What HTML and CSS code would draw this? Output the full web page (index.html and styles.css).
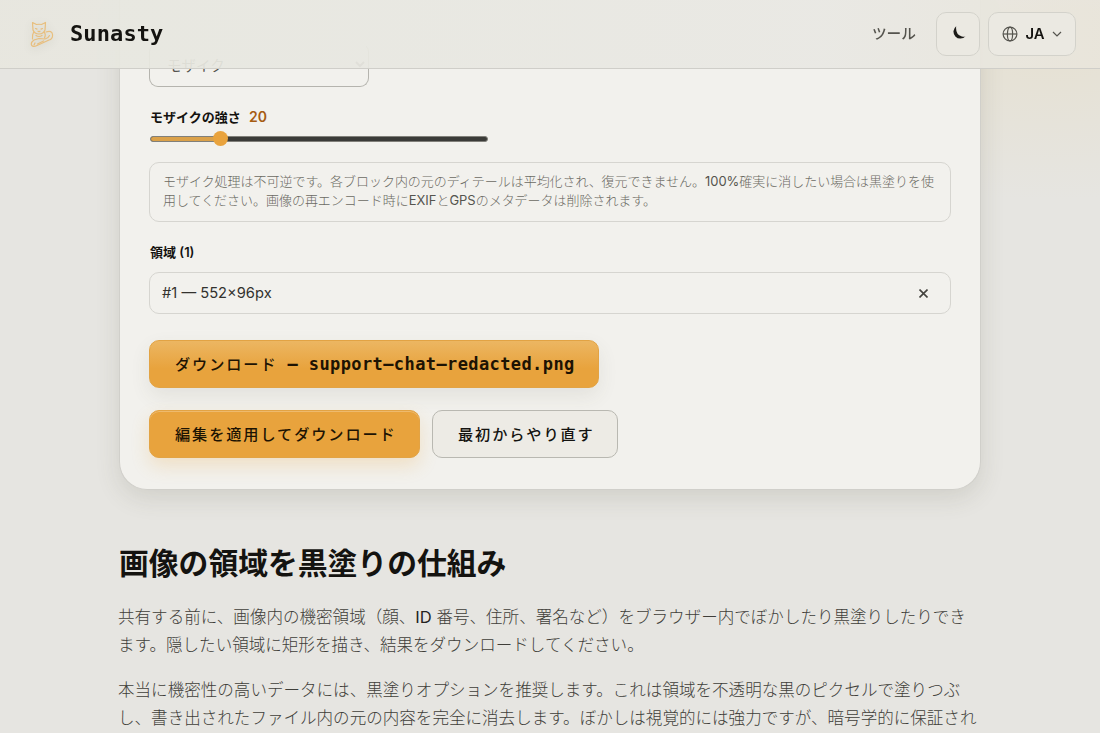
FILE: index.html
```html
<!DOCTYPE html>
<html lang="ja">
<head>
    <meta charset="UTF-8">
    <title>画像の領域を黒塗り - Sunasty</title>
    <link rel="stylesheet" href="styles.css">
</head>
<body>
<header class="header">
    <a href="#" class="brand">
        <svg class="logo" viewBox="0 0 28 28" fill="none" stroke="#e9a23b" stroke-width="1.200" stroke-linecap="round" stroke-linejoin="round">
            <path d="M5 10 L4.500 2.500 L8.500 4.500 Q11 4 13.500 4.500 L17.500 2.500 L17 10 Q15.500 14 11 14 Q6.500 14 5 10Z"/>
            <path d="M7.500 8.500l1.500.6M14.500 8.500l-1.500.6M10 11.200l1 .6 1-.6"/>
            <path d="M5.500 12.500Q4 15 4.500 19M16.500 12.500Q18 14.500 16.500 18M8 15.500q3 2 6 0"/>
            <path d="M18 12q6-2 6.500 2.500t-3.500 5.500l-12 5.500q-4.500 2-5.500-.5t2.500-5l5-1.500 6 .5q3.500-1 4.500-3.500"/>
            <path d="M6 25l1-2M9.500 24l6-3"/>
        </svg>
        <span>Sunasty</span>
    </a>
    <nav class="nav">
        <a href="#" class="nav-link">ツール</a>
        <button class="tool-btn theme-btn">
            <svg width="16" height="16" viewBox="0 0 16 16"><path d="M6.200.2A6.900 6.900 0 1 0 15.600 10.200Q14 11 11.800 10.600Q5.200 8.500 6.200.2Z" fill="#1c1b18"/></svg>
        </button>
        <button class="tool-btn lang-btn">
            <svg width="16" height="16" viewBox="0 0 16 16" fill="none" stroke="#55544e" stroke-width="1.200"><circle cx="8" cy="8" r="6.900"/><ellipse cx="8" cy="8" rx="2.600" ry="6.900"/><path d="M1 8h14"/></svg>
            <span>JA</span>
            <svg width="10" height="10" viewBox="0 0 10 10" fill="none" stroke="#55544e" stroke-width="1.200"><path d="M1 3l4 4 4-4"/></svg>
        </button>
    </nav>
</header>

<main class="main">
    <section class="card">
        <div class="select">
            <span>モザイク</span>
            <svg width="10" height="10" viewBox="0 0 10 10" fill="none" stroke="#77766f" stroke-width="2"><path d="M1 3l4 4 4-4"/></svg>
        </div>
        <div class="label">モザイクの強さ <span class="value">20</span></div>
        <div class="slider">
            <div class="slider-fill" style="width: 21%"></div>
            <div class="slider-thumb" style="left: 21%"></div>
        </div>
        <p class="note">モザイク処理は不可逆です。各ブロック内の元のディテールは平均化され、復元できません。<b>100%</b>確実に消したい場合は黒塗りを使<br>用してください。画像の再エンコード時に<b>EXIF</b>と<b>GPS</b>のメタデータは削除されます。</p>
        <div class="label region-label">領域 (1)</div>
        <div class="region">
            <span>#1 — 552×96px</span>
            <button class="remove"><svg width="9" height="9" viewBox="0 0 9 9" stroke="#45443f" stroke-width="1.600"><path d="M.5.5l8 8M8.500.5l-8 8"/></svg></button>
        </div>
        <a href="#" class="btn btn-download"><span class="text">ダウンロード</span><span class="dash">—</span><span class="file">support—chat—redacted.png</span></a>
        <div class="actions">
            <button class="btn btn-primary"><span class="text">編集を適用してダウンロード</span></button>
            <button class="btn btn-ghost"><span class="text">最初からやり直す</span></button>
        </div>
    </section>

    <article class="article">
        <h2>画像の領域を黒塗りの仕組み</h2>
        <p>共有する前に、画像内の機密領域（顔、<b>ID</b> 番号、住所、署名など）をブラウザー内でぼかしたり黒塗りしたりでき<br>ます。隠したい領域に矩形を描き、結果をダウンロードしてください。</p>
        <p>本当に機密性の高いデータには、黒塗りオプションを推奨します。これは領域を不透明な黒のピクセルで塗りつぶ<br>し、書き出されたファイル内の元の内容を完全に消去します。ぼかしは視覚的には強力ですが、暗号学的に保証され</p>
    </article>
</main>
</body>
</html>
```

FILE: styles.css
```css
*{
    margin: 0;
    padding: 0;
    box-sizing: border-box;
}
html, body{
    height: 100%;
    overflow: hidden;
}
body{
    font-family: Inter, "Noto Sans CJK JP", sans-serif;
    color: #141310;
    background: radial-gradient(ellipse 330px 150px at 1050px 50px, #e6e1d3, rgba(230,225,211,0)), #e6e5e1;
}
a{
    color: inherit;
    text-decoration: none;
}
button{
    font-family: inherit;
    color: inherit;
}
.header{
    position: fixed;
    z-index: 10;
    top: 0;
    left: 0;
    right: 0;
    height: 69px;
    display: flex;
    align-items: center;
    justify-content: space-between;
    padding: 0 24px 1px 28px;
    background: linear-gradient(90deg, rgba(231,231,223,.93), rgba(233,232,227,.93) 75%, rgba(232,229,219,.93));
    border-bottom: 1px solid #cfcec9;
}
.brand{
    display: flex;
    align-items: center;
    gap: 14px;
    font: bold 22px "DejaVu Sans Mono", monospace;
    letter-spacing: .1px;
}
.logo{
    width: 28px;
    height: 28px;
    opacity: .6;
    filter: drop-shadow(0 2px 4px rgba(90,80,60,.3));
}
.nav{
    display: flex;
    align-items: center;
    gap: 8px;
}
.nav-link{
    margin: -2px 12px 0 0;
    font-size: 14.700px;
    font-weight: 500;
    color: #55544e;
}
.tool-btn{
    display: flex;
    align-items: center;
    justify-content: center;
    height: 44px;
    border: 1px solid #d3d2cb;
    border-radius: 10px;
    background: #ebe9e2;
}
.tool-btn svg{
    flex: none;
}
.theme-btn{
    width: 44px;
}
.lang-btn{
    width: 88px;
    gap: 7px;
    font-size: 14.800px;
    font-weight: 600;
}
.main{
    width: 862px;
    margin: 0 auto;
}
.card{
    height: 490px;
    padding: 43px 29px 0;
    background: #f2f1ed;
    border: 1px solid #d0cfca;
    border-top: 0;
    border-radius: 0 0 28px 28px;
    box-shadow: 0 8px 24px rgba(80,80,60,.14);
}
.select{
    display: flex;
    align-items: center;
    justify-content: space-between;
    width: 220px;
    height: 44px;
    padding: 0 3px 2px 17px;
    font-size: 14.500px;
    color: #55544e;
    border: 1px solid #b5b4ae;
    border-top-color: transparent;
    border-radius: 9px;
}
.label{
    margin-top: 20px;
    padding-left: 1px;
    font-size: 13px;
    line-height: 20px;
    font-weight: 600;
}
.value{
    margin-left: 5px;
    font-size: 14px;
    color: #a65c12;
}
.slider{
    position: relative;
    width: 338px;
    height: 6px;
    margin: 9px 0 0 1px;
    background: #3b3b38;
    border: 1px solid #81807a;
    border-radius: 3px;
}
.slider-fill{
    height: 4px;
    background: #dba149;
    border-radius: 2px;
}
.slider-thumb{
    position: absolute;
    top: -6px;
    width: 15px;
    height: 15px;
    margin-left: -9px;
    border-radius: 50%;
    background: #e9a33d;
}
.note{
    height: 60px;
    margin-top: 20px;
    padding: 9px 13px;
    font-size: 12.970px;
    line-height: 19px;
    font-weight: 300;
    color: #6b6a63;
    white-space: nowrap;
    border: 1px solid #d6d5d0;
    border-radius: 10px;
}
.note b{
    font-weight: 400;
    color: #55544e;
}
.region-label{
    font-size: 13px;
}
.region{
    display: flex;
    align-items: center;
    justify-content: space-between;
    height: 42px;
    margin-top: 10px;
    padding: 0 22px 0 12px;
    font-size: 14.700px;
    color: #33322e;
    border: 1px solid #d6d5d0;
    border-radius: 10px;
}
.remove{
    display: flex;
    border: 0;
    background: none;
}
.btn{
    display: inline-flex;
    align-items: center;
    height: 48px;
    padding: 0 0 0 25px;
    font-size: 15.200px;
    font-weight: 500;
    letter-spacing: 1.900px;
    white-space: nowrap;
    border: 1px solid #e2a344;
    border-radius: 10px;
    background: #e8a33d;
    color: #1d1303;
}
.text{
    padding-bottom: 2px;
}
.btn-download{
    width: 450px;
    margin-top: 26px;
    background: linear-gradient(#ecb662, #e8a33d 60%);
    box-shadow: 0 8px 20px rgba(80,80,60,.09);
}
.dash{
    margin: 0 11px 0 10px;
    font: bold 17px "DejaVu Sans Mono", monospace;
    letter-spacing: 0;
}
.file{
    font: bold 17px "DejaVu Sans Mono", monospace;
    letter-spacing: .4px;
}
.actions{
    display: flex;
    gap: 12px;
    margin-top: 22px;
}
.btn-primary{
    width: 271px;
    box-shadow: 0 8px 18px rgba(232,163,61,.22), inset 0 1px rgba(255,255,255,.25);
}
.btn-ghost{
    width: 186px;
    color: #141310;
    background: #edebe5;
    border-color: #b9b8b1;
}
.article{
    padding-top: 51px;
}
.article h2{
    margin-bottom: 18px;
    font-size: 29.800px;
    line-height: 44px;
    font-weight: 600;
}
.article p{
    margin: 0 0 17px -1px;
    font-size: 16.560px;
    line-height: 28px;
    font-weight: 300;
    color: #3f3e39;
    white-space: nowrap;
}
.article b{
    font-weight: 400;
    color: #24231f;
}
```
